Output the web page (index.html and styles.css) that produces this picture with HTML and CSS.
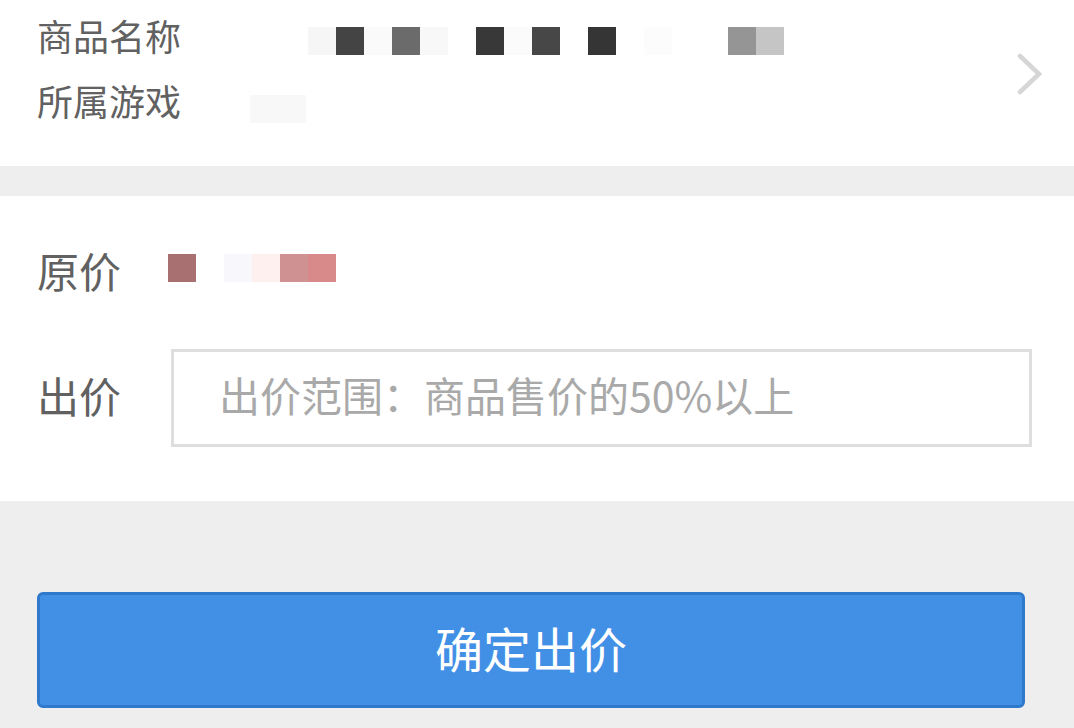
FILE: index.html
```html
<!DOCTYPE html>
<html lang="zh-CN">
<head>
<meta charset="utf-8">
<title>出价</title>
<link rel="stylesheet" href="styles.css">
</head>
<body>
<section class="goods">
  <div class="goods-rows">
    <div class="goods-row">
      <span class="goods-label">商品名称</span>
      <span class="mosaic mosaic-name">
        <i class="c-f7"></i><i class="c-44"></i><i class="c-fa"></i><i class="c-6b"></i><i class="c-f8"></i><i class="c-ff"></i><i class="c-38"></i><i class="c-fb"></i><i class="c-47"></i><i class="c-ff"></i><i class="c-35"></i><i class="c-ff"></i><i class="c-fc"></i><i class="c-ff"></i><i class="c-ff"></i><i class="c-95"></i><i class="c-c5"></i>
      </span>
    </div>
    <div class="goods-row">
      <span class="goods-label">所属游戏</span>
      <span class="mosaic mosaic-game"><i class="c-f8"></i><i class="c-f8"></i></span>
    </div>
  </div>
  <svg class="chevron" viewBox="0 0 26 42" width="26" height="42" aria-hidden="true">
    <polyline points="3,3 22,21 3,39" fill="none" stroke="#d6d6d6" stroke-width="4.5" stroke-linecap="round" stroke-linejoin="miter"/>
  </svg>
</section>

<section class="offer">
  <div class="offer-row">
    <span class="offer-label">原价</span>
    <span class="mosaic mosaic-price"><i class="p-1"></i><i class="p-2"></i><i class="p-3"></i><i class="p-4"></i><i class="p-5"></i><i class="p-6"></i></span>
  </div>
  <div class="offer-row">
    <span class="offer-label">出价</span>
    <input class="offer-input" type="text" placeholder="出价范围：商品售价的50%以上">
  </div>
</section>

<section class="actions">
  <button class="submit" type="button">确定出价</button>
</section>
</body>
</html>
```

FILE: styles.css
```css
* {
  box-sizing: border-box;
}

html, body {
  margin: 0;
  padding: 0;
}

body {
  background: #eeeeee;
  font-family: "Noto Sans CJK SC", "Noto Sans", sans-serif;
  color: #616161;
  width: 1074px;
  height: 728px;
  overflow: hidden;
}

/* goods info */
.goods {
  background: #ffffff;
  height: 166px;
  padding: 3px 31px 0 37px;
  display: flex;
  justify-content: space-between;
  align-items: flex-start;
}

.goods-rows {
  display: flex;
  flex-direction: column;
}

.goods-row {
  display: flex;
  align-items: center;
  height: 65px;
}

.goods-label {
  font-size: 36px;
  line-height: 65px;
  width: 271px;
  flex: none;
}

.mosaic {
  display: flex;
}

.mosaic i {
  display: block;
  width: 28px;
  height: 28px;
}

.mosaic-name {
  margin-top: 10px;
}

.mosaic-game {
  margin-top: 16px;
  margin-left: -58px;
}

.c-ff { background: #ffffff; }
.c-fc { background: #fcfcfc; }
.c-fb { background: #fbfbfb; }
.c-fa { background: #fafafa; }
.c-f8 { background: #f8f8f8; }
.c-f7 { background: #f6f6f6; }
.c-c5 { background: #c5c5c5; }
.c-95 { background: #959595; }
.c-6b { background: #6b6b6b; }
.c-47 { background: #474747; }
.c-44 { background: #444444; }
.c-38 { background: #383838; }
.c-35 { background: #353535; }

.chevron {
  margin-top: 50px;
  flex: none;
}

/* offer form */
.offer {
  background: #ffffff;
  margin-top: 30px;
  padding: 28px 42px 54px 37px;
  display: flex;
  flex-direction: column;
  gap: 27px;
}

.offer-row {
  display: grid;
  grid-template-columns: 134px 1fr;
  align-items: center;
  height: 98px;
}

.offer-label {
  font-size: 42px;
  line-height: 1;
  padding-bottom: 6px;
}

.mosaic-price {
  margin-left: -3px;
  margin-top: -10px;
}

.p-1 { background: #a87070; }
.p-2 { background: #ffffff; }
.p-3 { background: #f8f8fc; }
.p-4 { background: #fff0f0; }
.p-5 { background: #d09193; }
.p-6 { background: #d88a8a; }

.offer-input {
  display: block;
  width: 100%;
  height: 98px;
  border: 3px solid #dedede;
  border-radius: 0;
  padding: 0 0 8px 45px;
  margin: 0;
  font-family: inherit;
  font-size: 41px;
  color: #333333;
  background: #ffffff;
  outline: none;
}

.offer-input::placeholder {
  color: #a9a9a9;
}

/* action */
.actions {
  padding: 91px 49px 0 37px;
}

.submit {
  display: block;
  width: 100%;
  height: 116px;
  background: #4290e6;
  border: 3px solid #2f79cc;
  border-radius: 6px;
  color: #ffffff;
  font-family: inherit;
  font-size: 48px;
  padding: 0 0 6px;
  letter-spacing: 0;
}
```
